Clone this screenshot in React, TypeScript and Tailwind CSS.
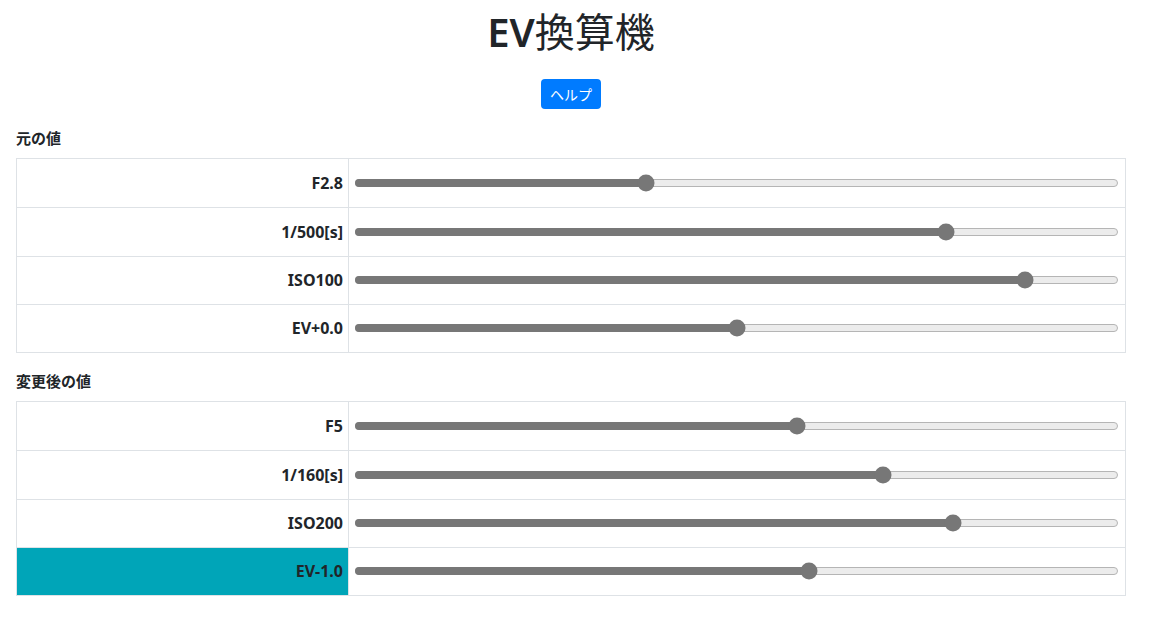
const FONT = '"Noto Sans", "Noto Sans CJK JP", sans-serif';

interface Row {
    label: string;
    pos: number;
    active?: boolean;
}

const before: Row[] = [
    { label: 'F2.8', pos: 0.381 },
    { label: '1/500[s]', pos: 0.775 },
    { label: 'ISO100', pos: 0.879 },
    { label: 'EV+0.0', pos: 0.501 },
];

const after: Row[] = [
    { label: 'F5', pos: 0.579 },
    { label: '1/160[s]', pos: 0.692 },
    { label: 'ISO200', pos: 0.785 },
    { label: 'EV-1.0', pos: 0.595, active: true },
];

function Slider({ pos }: { pos: number }) {
    return (
        <div className="relative h-[8px] w-full rounded-full border border-[#b5b5b5] bg-[#ececec]">
            <div className="absolute -left-px -top-px h-[8px] rounded-l-full bg-[#777777]" style={{ width: `${pos * 100}%` }} />
            <div
                className="absolute top-1/2 h-[17px] w-[17px] -translate-x-1/2 -translate-y-1/2 rounded-full bg-[#777777]"
                style={{ left: `${pos * 100}%` }}
            />
        </div>
    );
}

function Table({ rows }: { rows: Row[] }) {
    return (
        <div className="border border-[#dee2e6]">
            {rows.map((r, i) => (
                <div key={r.label} className={`flex h-[48.25px] ${i > 0 ? 'border-t border-[#dee2e6]' : ''}`}>
                    <div
                        className={`flex w-[332px] items-center justify-end border-r border-[#dee2e6] pr-[5px] text-[16px] font-bold text-[#212529] ${r.active ? 'bg-[#00a5b8]' : ''}`}
                    >
                        {r.label}
                    </div>
                    <div className="flex flex-1 items-center pl-[6px] pr-[7px]">
                        <Slider pos={r.pos} />
                    </div>
                </div>
            ))}
        </div>
    );
}

export default function App() {
    return (
        <div className="min-h-screen bg-white pl-4 text-[#212529]" style={{ fontFamily: FONT }}>
            <div className="w-[1110px]">
                <h1 className="pt-[8px] text-center text-[40px] leading-[48px]">
                    <span className="font-semibold">EV</span>
                    <span className="font-normal">換算機</span>
                </h1>
                <div className="mt-[23px] flex justify-center">
                    <button type="button" className="h-[30px] rounded bg-[#007bff] px-[9px] text-[14px] text-white">
                        ヘルプ
                    </button>
                </div>
                <h2 className="mt-[17px] mb-[8px] text-[15px] font-bold leading-[24px]">元の値</h2>
                <Table rows={before} />
                <h2 className="mt-[16px] mb-[8px] text-[15px] font-bold leading-[24px]">変更後の値</h2>
                <Table rows={after} />
            </div>
        </div>
    );
}
